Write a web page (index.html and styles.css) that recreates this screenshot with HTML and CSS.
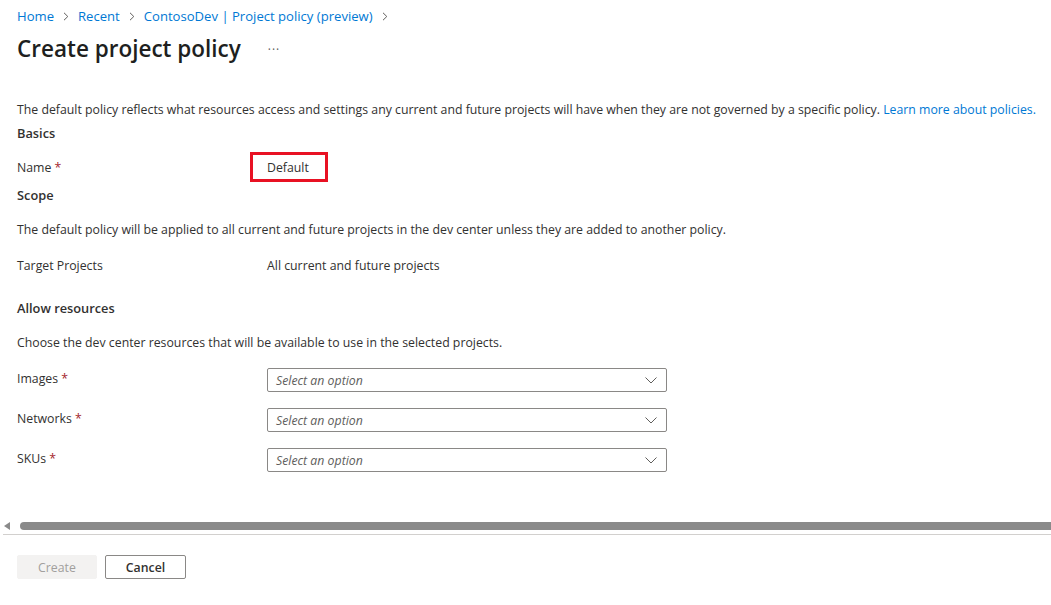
FILE: index.html
```html
<!DOCTYPE html>
<html lang="en">
<head>
<meta charset="utf-8">
<title>Create project policy</title>
<link rel="stylesheet" href="styles.css">
</head>
<body>
<div class="page">
  <nav class="crumbs">
    <a href="#">Home</a><svg class="sep" width="6" height="9" viewBox="0 0 6 9"><path d="M1 0.8 L4.8 4.5 L1 8.2" fill="none" stroke="#605e5c" stroke-width="1"/></svg>
    <a href="#">Recent</a><svg class="sep" width="6" height="9" viewBox="0 0 6 9"><path d="M1 0.8 L4.8 4.5 L1 8.2" fill="none" stroke="#605e5c" stroke-width="1"/></svg>
    <a href="#">ContosoDev | Project policy (preview)</a><svg class="sep" width="6" height="9" viewBox="0 0 6 9"><path d="M1 0.8 L4.8 4.5 L1 8.2" fill="none" stroke="#605e5c" stroke-width="1"/></svg>
  </nav>
  <div class="title-row">
    <h1 class="title">Create project policy</h1>
    <span class="more">···</span>
  </div>
  <p class="desc">The default policy reflects what resources access and settings any current and future projects will have when they are not governed by a specific policy. <a href="#">Learn more about policies.</a></p>
  <h2 class="section first">Basics</h2>
  <div class="row name-row">
    <div class="label">Name <span class="req">*</span></div>
    <div class="name-box">Default</div>
  </div>
  <h2 class="section scope">Scope</h2>
  <p class="text">The default policy will be applied to all current and future projects in the dev center unless they are added to another policy.</p>
  <div class="row plain">
    <div class="label">Target Projects</div>
    <div class="value">All current and future projects</div>
  </div>
  <h2 class="section allow">Allow resources</h2>
  <p class="text">Choose the dev center resources that will be available to use in the selected projects.</p>
  <div class="row sel-row">
    <div class="label">Images <span class="req">*</span></div>
    <div class="select"><span>Select an option</span><svg width="12" height="7" viewBox="0 0 12 7"><path d="M0.5 0.5 L6 6 L11.5 0.5" fill="none" stroke="#605e5c" stroke-width="1"/></svg></div>
  </div>
  <div class="row sel-row">
    <div class="label">Networks <span class="req">*</span></div>
    <div class="select"><span>Select an option</span><svg width="12" height="7" viewBox="0 0 12 7"><path d="M0.5 0.5 L6 6 L11.5 0.5" fill="none" stroke="#605e5c" stroke-width="1"/></svg></div>
  </div>
  <div class="row sel-row">
    <div class="label">SKUs <span class="req">*</span></div>
    <div class="select"><span>Select an option</span><svg width="12" height="7" viewBox="0 0 12 7"><path d="M0.5 0.5 L6 6 L11.5 0.5" fill="none" stroke="#605e5c" stroke-width="1"/></svg></div>
  </div>
</div>
<div class="hscroll">
  <span class="arrow"></span>
  <span class="thumb"></span>
</div>
<div class="divider"></div>
<div class="footer">
  <button class="btn disabled" type="button">Create</button>
  <button class="btn cancel" type="button">Cancel</button>
</div>
</body>
</html>
```

FILE: styles.css
```css
* { box-sizing: border-box; }
html, body { margin: 0; padding: 0; background: #fff; overflow: hidden; }
body {
  font-family: "Segoe UI", "Open Sans", "Noto Sans", sans-serif;
  font-size: 12.3px;
  color: #323130;
  width: 1051px;
  height: 605px;
}
a { color: #0078d4; text-decoration: none; }
.page { padding: 7px 0 0 17px; }
.crumbs { line-height: 18px; height: 18px; font-size: 13.1px; display: flex; align-items: center; }
.crumbs .sep { margin: 1px 9px 0 9px; flex: none; }
.title-row { display: flex; align-items: center; margin-top: 8px; height: 32px; }
.title { font-size: 22.5px; font-weight: 600; margin: 0; line-height: 32px; color: #201f1e; }
.more { margin-left: 27px; color: #605e5c; font-size: 12px; letter-spacing: 1px; }
.desc { margin: 36px 0 0 0; line-height: 18px; white-space: nowrap; }
.section { font-size: 12.8px; font-weight: 600; margin: 0; line-height: 18px; }
.section.first { margin-top: 5px; }
.section.scope { margin-top: 4px; }
.section.allow { margin-top: 24px; }
.text { margin: 17px 0 0 0; line-height: 18px; }
.row { display: flex; align-items: center; }
.label { width: 233px; flex: none; line-height: 18px; padding-top: 2px; }
.req { color: #a4262c; }
.name-row { margin-top: 10px; height: 30px; }
.name-box {
  border: 3px solid #e81123;
  height: 30px;
  width: 78px;
  padding-left: 14px;
  line-height: 25px;
}
.plain { margin-top: 17px; align-items: flex-start; }
.plain .label { width: 250px; padding-top: 1px; }
.plain .value { line-height: 18px; padding-top: 1px; }
.sel-row { margin-top: 16px; height: 24px; }
.sel-row:first-of-type { margin-top: 15px; }
.sel-row .label { width: 250px; align-self: flex-start; line-height: 18px; margin-top: 1px; padding-top: 1px; }
.select {
  width: 400px;
  height: 24px;
  border: 1px solid #8a8886;
  border-radius: 2px;
  display: flex;
  align-items: center;
  justify-content: space-between;
  padding: 1px 9px 0 8px;
  font-style: italic;
  color: #605e5c;
}
.hscroll { margin-top: 50px; height: 8px; display: flex; align-items: center; }
.arrow {
  width: 0; height: 0;
  border-top: 4px solid transparent;
  border-bottom: 4px solid transparent;
  border-right: 6px solid #8a8a8a;
  margin-left: 4px;
}
.thumb {
  height: 8px;
  background: #8a8a8a;
  border-radius: 4px 0 0 4px;
  margin-left: 10px;
  flex: 1;
}
.divider { margin: 4px 0 0 3px; height: 1px; background: #d2d0ce; }
.footer { display: flex; gap: 8px; padding: 20px 0 0 17px; }
.btn {
  font-family: inherit;
  font-size: 12.3px;
  height: 24px;
  width: 80px;
  border-radius: 2px;
  padding: 1px 0 0 0;
  line-height: 21px;
}
.btn.disabled { background: #f3f2f1; border: 1px solid #f3f2f1; color: #a19f9d; }
.btn.cancel { background: #fff; border: 1px solid #8a8886; color: #323130; font-weight: 600; width: 81px; }
```
